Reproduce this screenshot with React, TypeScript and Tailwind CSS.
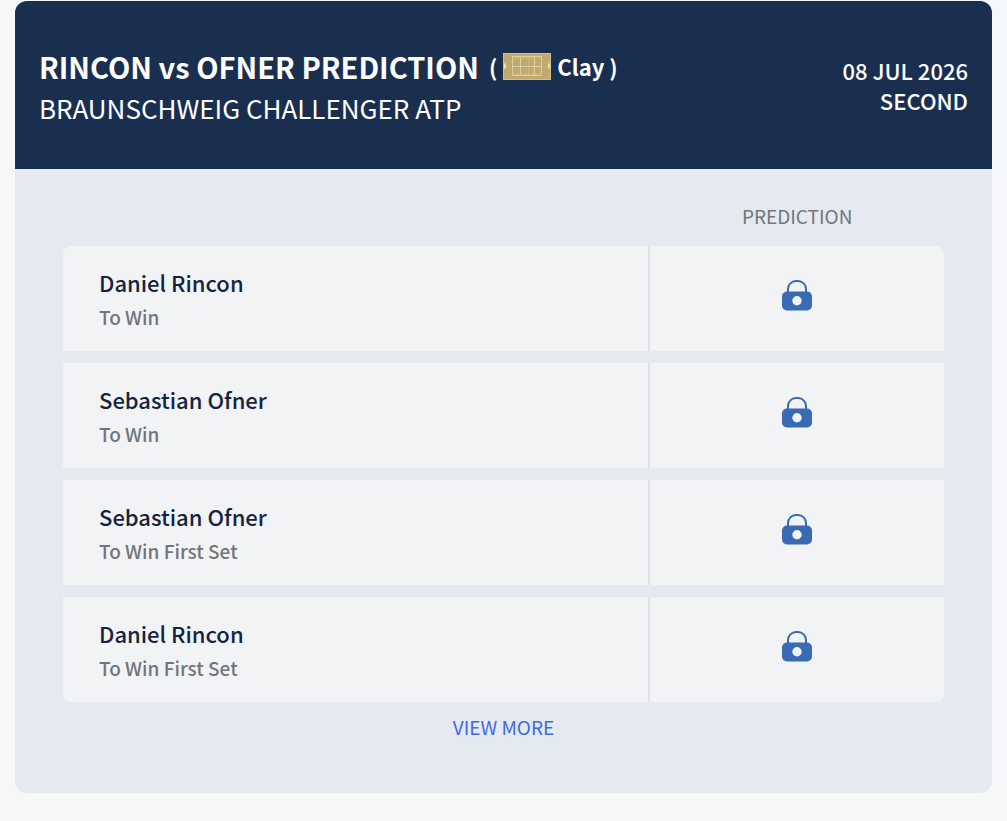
type Pick = {
  id: number;
  player: string;
  market: string;
};

const match = {
  title: "RINCON vs OFNER PREDICTION",
  tournament: "BRAUNSCHWEIG CHALLENGER ATP",
  surface: "Clay",
  date: "08 JUL 2026",
  round: "SECOND",
};

const picks: Pick[] = [
  { id: 1, player: "Daniel Rincon", market: "To Win" },
  { id: 2, player: "Sebastian Ofner", market: "To Win" },
  { id: 3, player: "Sebastian Ofner", market: "To Win First Set" },
  { id: 4, player: "Daniel Rincon", market: "To Win First Set" },
];

function CourtIcon() {
  return (
    <svg width="48" height="27" viewBox="0 0 48 27" fill="none" aria-hidden="true">
      <rect width="48" height="27" fill="#c2aa6e" />
      <rect x="0.5" y="0.5" width="47" height="26" stroke="#d3c08c" />
      <g stroke="#e4d9b2" strokeWidth="0.8">
        <rect x="9.5" y="3.5" width="29" height="19" />
        <path d="M17.5 4v18M31.5 4v18M9.5 13.5h29" />
      </g>
      <path d="M9.5 5h29M9.5 21h29M25.5 4v18" stroke="#d3c38f" strokeWidth="0.6" />
      <path d="M2 10.5v5M46 10.5v5" stroke="#f6f0dd" strokeWidth="1.4" />
    </svg>
  );
}

function LockIcon() {
  return (
    <svg width="30" height="31" viewBox="0 0 30 31" fill="none" role="img" aria-label="Locked" className="mx-auto block">
      <path d="M6 13V9a8 8 0 0 1 8-8h2a8 8 0 0 1 8 8v4" stroke="#3a6ab3" strokeWidth="2" />
      <path
        fillRule="evenodd"
        d="M5 11.5h20a5 5 0 0 1 5 5v9a5 5 0 0 1-5 5H5a5 5 0 0 1-5-5v-9a5 5 0 0 1 5-5zM15 16a4.7 4.7 0 1 0 0 9.4 4.7 4.7 0 0 0 0-9.4z"
        fill="#3a6ab3"
      />
    </svg>
  );
}

function PickRow({ pick }: { pick: Pick }) {
  return (
    <tr className="group bg-[#f1f3f5]">
      <th
        scope="row"
        className="border-r-2 border-[#dfe3e6] pt-[19px] pr-4 pb-4 pl-9 text-left font-medium group-first:rounded-tl-lg group-last:rounded-bl-lg"
      >
        <p className="text-[22px] leading-[34px] text-[#16233f]">{pick.player}</p>
        <p className="text-[19px] leading-9 text-[#72767a]">{pick.market}</p>
      </th>
      <td className="pb-1.5 group-first:rounded-tr-lg group-last:rounded-br-lg">
        <LockIcon />
      </td>
    </tr>
  );
}

export default function App() {
  return (
    <div className="min-h-screen bg-[#f5f7f9] px-[15px] pt-px pb-7 font-['Noto_Sans_CJK_SC',sans-serif]">
      <section className="overflow-hidden rounded-xl bg-[#e5eaf1]">
        <header className="flex items-center justify-between gap-4 bg-[#1a2f50] px-6 py-10 text-white">
          <div className="pt-1">
            <h1 className="flex flex-wrap items-center gap-x-2.5 text-[29px] leading-[42px] font-bold">
              {match.title}
              <span className="flex items-center gap-[6px] text-[22px]">
                ( <CourtIcon /> {match.surface} )
              </span>
            </h1>
            <p className="text-[26px] leading-[42px]">{match.tournament}</p>
          </div>
          <div className="text-right text-[22px] leading-[30px] font-medium">
            <p>{match.date}</p>
            <p>{match.round}</p>
          </div>
        </header>

        <div className="px-12 pt-4 pb-[53px]">
          <table className="w-full table-fixed border-separate border-spacing-x-0 border-spacing-y-3">
            <thead>
              <tr>
                <td className="w-2/3" />
                <th scope="col" className="w-1/3 text-[19px] leading-[37px] font-normal text-[#72767a]">
                  PREDICTION
                </th>
              </tr>
            </thead>
            <tbody>
              {picks.map((pick) => (
                <PickRow key={pick.id} pick={pick} />
              ))}
            </tbody>
          </table>
          <div className="flex justify-center">
            <a href="#more" className="text-[19px] leading-[26px] text-[#4169e1]">
              VIEW MORE
            </a>
          </div>
        </div>
      </section>
    </div>
  );
}
